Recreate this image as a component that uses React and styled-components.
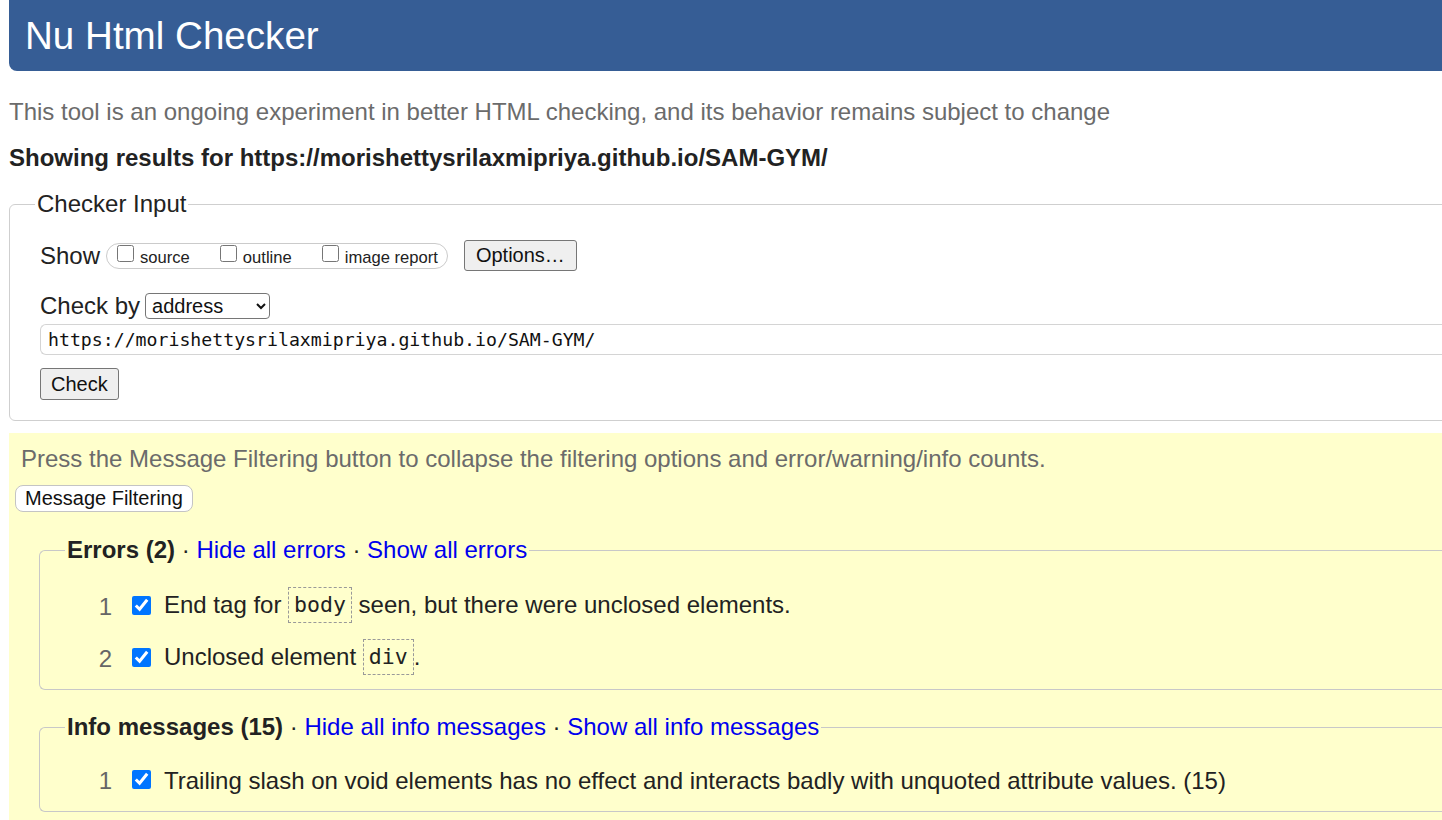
import React from "react";
import styled, { createGlobalStyle } from "styled-components";

const Global = createGlobalStyle`
  html, body { margin: 0; padding: 0; background: #fff; overflow: hidden; }
  body { font-family: "Liberation Sans", Arial, sans-serif; color: #222; }
`;

const Page = styled.div`
  width: 1520px;
  padding-left: 9px;
  font-size: 24px;
  line-height: 28px;
`;

const Header = styled.header`
  height: 71px;
  box-sizing: border-box;
  background: #365d95;
  border-radius: 0 0 8px 8px;
  padding: 14px 0 0 16px;
`;

const Title = styled.h1`
  margin: 0;
  font-size: 38.6px;
  line-height: 44px;
  font-weight: normal;
  color: #fff;
`;

const Intro = styled.p`
  margin: 27px 0 0;
  color: #6b6b6b;
`;

const Results = styled.p`
  margin: 18px 0 0;
  font-weight: bold;
`;

const InputSet = styled.fieldset`
  margin: 18px 0 0;
  border: 1px solid #cfcfcf;
  border-radius: 6px;
  padding: 0 0 20px 30px;
  min-width: 0;
`;

const Legend = styled.legend`
  padding: 0 2px;
  margin-left: ${p => p.$shift || 0}px;
  font-size: 24px;
  line-height: 28px;
`;

const Row = styled.div`
  display: flex;
  align-items: center;
  margin-top: ${p => p.$mt || 0}px;
`;

const Label = styled.span`
  margin-right: ${p => p.$mr || 0}px;
`;

const Group = styled.div`
  display: flex;
  align-items: center;
  height: 26px;
  box-sizing: border-box;
  border: 1px solid #cbcbcb;
  border-radius: 13px;
  padding: 0 9px 0 10px;
  gap: 30px;
`;

const Choice = styled.label`
  display: flex;
  align-items: center;
  font-size: 16.6px;
  line-height: 18px;
  gap: 6px;
`;

const SmallBox = styled.input`
  width: 17px;
  height: 17px;
  margin: 0 0 4px;
`;

const ChoiceText = styled.span`
  padding-top: 5px;
`;

const Button = styled.button`
  font-family: "Liberation Sans", Arial, sans-serif;
  font-size: 20px;
  color: #111;
  height: ${p => p.$h || 31}px;
  padding: 0 ${p => p.$px || 11}px;
  margin-left: ${p => p.$ml || 0}px;
  background: ${p => (p.$light ? "#fff" : "#efefef")};
  border: 1px solid ${p => (p.$light ? "#c4c4c4" : "#767676")};
  border-radius: ${p => p.$r || 3}px;
  box-sizing: border-box;
`;

const Select = styled.select`
  font-family: "Liberation Sans", Arial, sans-serif;
  font-size: 20px;
  width: 125px;
  height: 26px;
  border: 1px solid #767676;
  border-radius: 4px;
  background: #fff;
  color: #111;
  padding: 0 2px;
`;

const UrlField = styled.div`
  margin-top: 4px;
  height: 31px;
  box-sizing: border-box;
  border: 1px solid #d4d4d4;
  border-right: none;
  border-radius: 6px 0 0 6px;
  padding-left: 7px;
  font-family: "DejaVu Sans Mono", "Liberation Mono", monospace;
  font-size: 18.2px;
  line-height: 29px;
  color: #111;
`;

const Filters = styled.section`
  margin-top: 12px;
  background: #ffffcc;
  padding: 12px 0 20px;
`;

const Hint = styled.p`
  margin: 0 0 10px 12px;
  color: #6b6b6b;
`;

const MsgSet = styled.fieldset`
  margin: ${p => p.$mt}px 0 0 30px;
  border: 1px solid #c8c8c8;
  border-right: none;
  border-radius: 6px 0 0 6px;
  padding: 0 0 12px 26px;
  min-width: 0;
`;

const Strong = styled.strong`
  color: #222;
`;

const Link = styled.a`
  color: #0000ee;
  text-decoration: none;
`;

const List = styled.ol`
  list-style: none;
  margin: ${p => p.$mt}px 0 0;
  padding: 0;
  display: flex;
  flex-direction: column;
  gap: 16px;
`;

const Item = styled.li`
  display: flex;
  align-items: center;
  height: 36px;
`;

const Num = styled.span`
  width: 46px;
  text-align: right;
  color: #666;
`;

const Tick = styled.input`
  width: 19px;
  height: 19px;
  margin: 0 13px 4px 20px;
  accent-color: #0075ff;
`;

const Msg = styled.span`
  white-space: pre;
`;

const Code = styled.code`
  display: inline-block;
  font-family: "DejaVu Sans Mono", "Liberation Mono", monospace;
  font-size: 21.5px;
  line-height: 34px;
  padding: 0 5px;
  border: 1px dashed #999;
  vertical-align: middle;
  margin-top: -4px;
`;

function MessageItem({ n, children }) {
  return (
    <Item>
      <Num>{n}</Num>
      <Tick type="checkbox" defaultChecked />
      <Msg>{children}</Msg>
    </Item>
  );
}

export default function App() {
  return (
    <>
      <Global />
      <Page>
        <Header>
          <Title>Nu Html Checker</Title>
        </Header>
        <Intro>
          This tool is an ongoing experiment in better HTML checking, and its behavior remains subject to change
        </Intro>
        <Results>Showing results for https://morishettysrilaxmipriya.github.io/SAM-GYM/</Results>

        <InputSet>
          <Legend $shift={-5}>Checker Input</Legend>
          <Row $mt={22}>
            <Label $mr={6}>Show</Label>
            <Group>
              <Choice>
                <SmallBox type="checkbox" />
                <ChoiceText>source</ChoiceText>
              </Choice>
              <Choice>
                <SmallBox type="checkbox" />
                <ChoiceText>outline</ChoiceText>
              </Choice>
              <Choice>
                <SmallBox type="checkbox" />
                <ChoiceText>image report</ChoiceText>
              </Choice>
            </Group>
            <Button $ml={16}>Options…</Button>
          </Row>
          <Row $mt={21}>
            <Label $mr={5}>Check by</Label>
            <Select defaultValue="address">
              <option value="address">address</option>
              <option value="file">file upload</option>
              <option value="text">text input</option>
            </Select>
          </Row>
          <UrlField>https://morishettysrilaxmipriya.github.io/SAM-GYM/</UrlField>
          <Row $mt={13}>
            <Button $h={32} $px={10}>Check</Button>
          </Row>
        </InputSet>

        <Filters>
          <Hint>Press the Message Filtering button to collapse the filtering options and error/warning/info counts.</Hint>
          <Button $light $h={27} $px={9} $r={8} $ml={6}>Message Filtering</Button>

          <MsgSet $mt={24}>
            <Legend $shift={-1}>
              <Strong>Errors (2)</Strong> · <Link href="#">Hide all errors</Link> · <Link href="#">Show all errors</Link>
            </Legend>
            <List $mt={25}>
              <MessageItem n={1}>
                End tag for <Code>body</Code> seen, but there were unclosed elements.
              </MessageItem>
              <MessageItem n={2}>
                Unclosed element <Code>div</Code>.
              </MessageItem>
            </List>
          </MsgSet>

          <MsgSet $mt={23}>
            <Legend $shift={-1}>
              <Strong>Info messages (15)</Strong> · <Link href="#">Hide all info messages</Link> · <Link href="#">Show all info messages</Link>
            </Legend>
            <List $mt={22}>
              <MessageItem n={1}>
                Trailing slash on void elements has no effect and interacts badly with unquoted attribute values. (15)
              </MessageItem>
            </List>
          </MsgSet>
        </Filters>
      </Page>
    </>
  );
}
